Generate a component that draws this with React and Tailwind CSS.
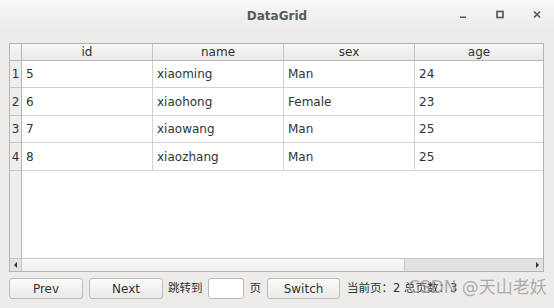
const font = { fontFamily: '"DejaVu Sans", "Noto Sans CJK SC", sans-serif' };

const rows = [
  ['5', 'xiaoming', 'Man', '24'],
  ['6', 'xiaohong', 'Female', '23'],
  ['7', 'xiaowang', 'Man', '25'],
  ['8', 'xiaozhang', 'Man', '25'],
];
const heights = ['h-[27px]', 'h-[28px]', 'h-[27px]', 'h-[28px]'];

function Btn({ children, w }) {
  return (
    <button className={`${w} h-[21px] rounded-[3px] border border-[#bdbbb8] bg-gradient-to-b from-[#fbfbfa] to-[#ebeae8] text-[12px] text-[#2e3436] leading-none`}>
      {children}
    </button>
  );
}

export default function App() {
  return (
    <div className="w-[554px] h-[308px] bg-[#edecea] flex flex-col text-[#2e3436] overflow-hidden" style={font}>
      {/* title bar */}
      <div className="h-[30px] grid grid-cols-[1fr_auto_1fr] items-center bg-gradient-to-b from-[#f8f8f7] to-[#ecebe9]">
        <div />
        <div className="text-[12px] font-bold text-[#555c5f] pt-[1px]">DataGrid</div>
        <div className="flex items-center justify-end gap-[27px] pr-[12px]">
          <svg width="10" height="10" viewBox="0 0 10 10"><rect x="2" y="6.5" width="6" height="1.5" fill="#555c5f" /></svg>
          <svg width="10" height="10" viewBox="0 0 10 10"><rect x="2" y="1.5" width="6" height="6" fill="none" stroke="#555c5f" strokeWidth="1.7" /></svg>
          <svg width="10" height="10" viewBox="0 0 10 10"><path d="M2 1.5 L8 7.5 M8 1.5 L2 7.5" stroke="#555c5f" strokeWidth="1.7" /></svg>
        </div>
      </div>

      <div className="flex flex-col pl-[9px] pr-[10px] pt-[13px]">
        {/* table */}
        <div className="h-[229px] border border-[#b5b3b0] bg-white flex flex-col overflow-hidden">
          <div className="flex-1 flex overflow-hidden">
            {/* row header */}
            <div className="w-[12px] shrink-0 bg-[#efeeec] border-r border-[#b8b6b3] flex flex-col">
              <div className="h-[17px] border-b border-[#b8b6b3] bg-gradient-to-b from-[#f7f7f6] to-[#ebeae8]" />
              {rows.map((r, i) => (
                <div key={i} className={`${heights[i]} border-b border-[#c8c6c3] flex items-center justify-center text-[12px] text-[#2e3436]`}>
                  {i + 1}
                </div>
              ))}
            </div>
            {/* columns */}
            <div className="flex-1 flex flex-col overflow-hidden">
              <div className="h-[17px] flex shrink-0 border-b border-[#b8b6b3] bg-gradient-to-b from-[#f7f7f6] to-[#ebeae8]">
                {['id', 'name', 'sex', 'age'].map((h, i) => (
                  <div key={h} className={`${i < 3 ? 'w-[131px] border-r border-[#c8c6c3]' : 'flex-1'} shrink-0 flex items-center justify-center text-[12px] text-[#2e3436]`}>
                    {h}
                  </div>
                ))}
              </div>
              {rows.map((r, i) => (
                <div key={i} className={`${heights[i]} flex shrink-0 border-b border-[#d4d2cf]`}>
                  {r.map((c, j) => (
                    <div key={j} className={`${j < 3 ? 'w-[131px] border-r border-[#d4d2cf]' : 'flex-1'} shrink-0 flex items-center pl-[4px] text-[12px] text-[#2e3436]`}>
                      {c}
                    </div>
                  ))}
                </div>
              ))}
            </div>
          </div>
          {/* horizontal scrollbar */}
          <div className="h-[13px] shrink-0 flex border-t border-[#c8c6c3] bg-[#e3e2e0]">
            <div className="w-[11px] flex items-center justify-center">
              <svg width="5" height="6" viewBox="0 0 5 6"><path d="M4 0 L1 3 L4 6 Z" fill="#2e3436" /></svg>
            </div>
            <div className="w-[384px] bg-gradient-to-b from-[#fafafa] to-[#f0efee] border-x border-[#c8c6c3]" />
            <div className="flex-1" />
            <div className="w-[11px] flex items-center justify-center">
              <svg width="5" height="6" viewBox="0 0 5 6"><path d="M1 0 L4 3 L1 6 Z" fill="#2e3436" /></svg>
            </div>
          </div>
        </div>

        {/* pager */}
        <div className="relative mt-[6px] h-[21px] flex items-center text-[12px] text-[#2e3436]">
          <Btn w="w-[74px]">Prev</Btn>
          <div className="w-[6px]" />
          <Btn w="w-[74px]">Next</Btn>
          <span className="ml-[5px] text-[11.5px]">跳转到</span>
          <input className="ml-[5px] w-[36px] h-[21px] rounded-[3px] border border-[#bdbbb8] bg-white outline-none" />
          <span className="ml-[6px] text-[11.5px]">页</span>
          <div className="w-[6px]" />
          <Btn w="w-[73px]">Switch</Btn>
          <span className="ml-[7px] text-[11.5px]">当前页：2 总页数：3</span>
          <span className="absolute left-[399px] top-[-3px] text-[17px] text-[#9b9b9b]/80 whitespace-nowrap pointer-events-none">CSDN @天山老妖</span>
        </div>
      </div>
    </div>
  );
}
